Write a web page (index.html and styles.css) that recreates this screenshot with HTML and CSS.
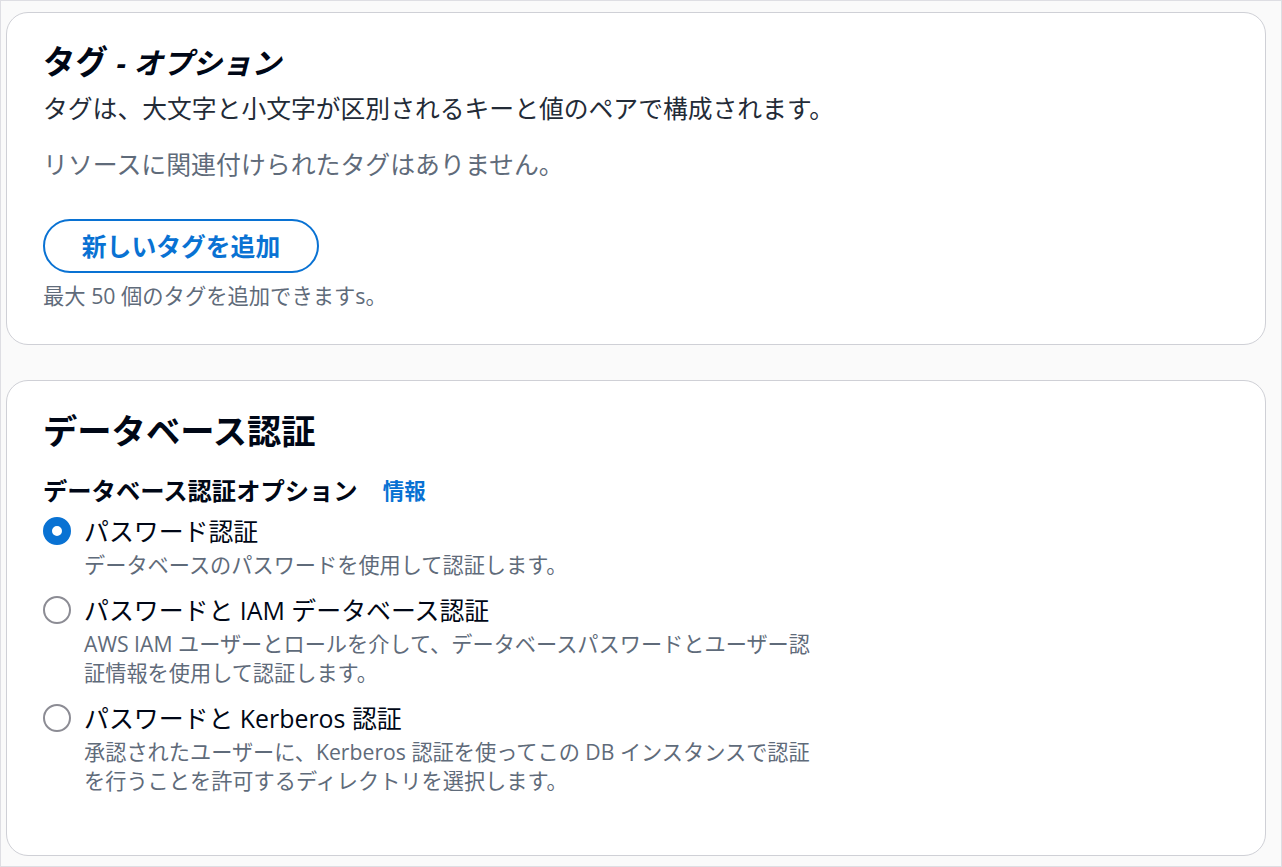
FILE: index.html
```html
<!DOCTYPE html>
<html lang="ja">
<head>
<meta charset="utf-8">
<title>タグ / データベース認証</title>
<link rel="stylesheet" href="styles.css">
</head>
<body>
<div class="frame">
  <section class="card card-tags">
    <h2 class="tag-title">タグ <i class="opt">- オプション</i></h2>
    <p class="tag-desc">タグは、大文字と小文字が区別されるキーと値のペアで構成されます。</p>
    <p class="empty">リソースに関連付けられたタグはありません。</p>
    <button class="add-btn" type="button">新しいタグを追加</button>
    <p class="hint">最大 50 個のタグを追加できますs。</p>
  </section>

  <section class="card card-auth">
    <h2 class="auth-title">データベース認証</h2>
    <div class="field-label">
      <span class="label-text">データベース認証オプション</span>
      <a class="info" href="#">情報</a>
    </div>
    <div class="radios">
      <div class="radio">
        <span class="dot dot-on"></span>
        <div class="radio-body">
          <div class="radio-label">パスワード認証</div>
          <div class="radio-desc">データベースのパスワードを使用して認証します。</div>
        </div>
      </div>
      <div class="radio">
        <span class="dot"></span>
        <div class="radio-body">
          <div class="radio-label">パスワードと IAM データベース認証</div>
          <div class="radio-desc">AWS IAM ユーザーとロールを介して、データベースパスワードとユーザー認<br>証情報を使用して認証します。</div>
        </div>
      </div>
      <div class="radio">
        <span class="dot"></span>
        <div class="radio-body">
          <div class="radio-label">パスワードと Kerberos 認証</div>
          <div class="radio-desc">承認されたユーザーに、Kerberos 認証を使ってこの DB インスタンスで認証<br>を行うことを許可するディレクトリを選択します。</div>
        </div>
      </div>
    </div>
  </section>
</div>
</body>
</html>
```

FILE: styles.css
```css
* { box-sizing: border-box; }

html, body {
  margin: 0;
  padding: 0;
}

body {
  font-family: "Open Sans", "Noto Sans CJK JP", sans-serif;
  color: #000716;
  background: #ffffff;
}

.frame {
  width: 1282px;
  height: 867px;
  border: 1px solid #dedee3;
  background: #fafafa;
  padding: 11px 15px 0 5px;
  display: flex;
  flex-direction: column;
  gap: 35px;
}

.card {
  background: #ffffff;
  border: 1px solid #cfd0d6;
  border-radius: 22px;
  padding-left: 36px;
}

.card-tags {
  height: 333px;
  padding-top: 29px;
}

.card-auth {
  height: 476px;
  padding-top: 28px;
}

h2, p { margin: 0; }

.tag-title {
  font-size: 32.5px;
  line-height: 40px;
  font-weight: 700;
  letter-spacing: 0;
}

.opt {
  font-size: 29.5px;
  font-style: italic;
  font-weight: 700;
}

.tag-desc {
  font-size: 24.8px;
  line-height: 32px;
  margin-top: 9px;
  color: #232b37;
}

.empty {
  font-size: 24.9px;
  line-height: 34px;
  margin-top: 23px;
  color: #5f6b7a;
}

.add-btn {
  display: block;
  margin-top: 38px;
  width: 276px;
  height: 54px;
  border: 2px solid #0972d3;
  border-radius: 27px;
  background: #ffffff;
  color: #0972d3;
  font-family: "Open Sans", "Noto Sans CJK JP", sans-serif;
  font-size: 24.8px;
  font-weight: 700;
  padding: 0 0 2px;
}

.hint {
  font-size: 21.3px;
  line-height: 28px;
  margin-top: 9px;
  color: #5f6b7a;
}

.auth-title {
  font-size: 34.3px;
  line-height: 44px;
  font-weight: 700;
}

.field-label {
  display: flex;
  align-items: center;
  gap: 25px;
  margin-top: 19px;
  height: 34px;
}

.label-text {
  font-size: 24.3px;
  font-weight: 700;
}

.info {
  font-size: 21.5px;
  font-weight: 700;
  color: #0972d3;
  text-decoration: none;
}

.radios {
  display: flex;
  flex-direction: column;
  gap: 14px;
  margin-top: 8px;
}

.radio {
  display: flex;
  align-items: flex-start;
  gap: 13px;
}

.dot {
  flex: none;
  width: 28px;
  height: 28px;
  margin-top: 3px;
  border-radius: 50%;
  border: 2px solid #8c8c94;
  background: #ffffff;
}

.dot-on {
  border: 9px solid #0972d3;
}

.radio-label {
  font-size: 24.9px;
  line-height: 34px;
  color: #000716;
}

.radio-desc {
  font-size: 21.2px;
  line-height: 29px;
  margin-top: 2px;
  color: #5f6b7a;
}
```
